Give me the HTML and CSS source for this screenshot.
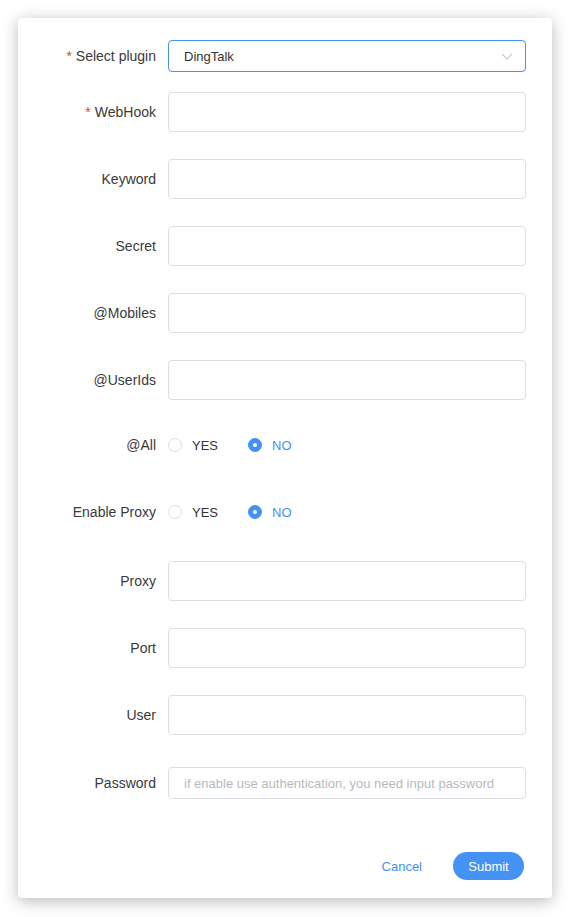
FILE: index.html
```html
<!DOCTYPE html>
<html>
<head>
<meta charset="utf-8">
<link rel="stylesheet" href="styles.css">
</head>
<body>
<div class="card">
  <form class="form">
    <div class="row row-select">
      <label class="label"><span class="req">*</span>Select plugin</label>
      <div class="control">
        <div class="select">
          <span class="select-value">DingTalk</span>
          <svg class="chevron" width="12" height="7" viewBox="0 0 12 7"><path d="M1 1 L6 6 L11 1" fill="none" stroke="#c5c8ce" stroke-width="1.1"/></svg>
        </div>
      </div>
    </div>
    <div class="row">
      <label class="label"><span class="req">*</span>WebHook</label>
      <div class="control"><input class="input" type="text"></div>
    </div>
    <div class="row">
      <label class="label">Keyword</label>
      <div class="control"><input class="input" type="text"></div>
    </div>
    <div class="row">
      <label class="label">Secret</label>
      <div class="control"><input class="input" type="text"></div>
    </div>
    <div class="row">
      <label class="label">@Mobiles</label>
      <div class="control"><input class="input" type="text"></div>
    </div>
    <div class="row">
      <label class="label">@UserIds</label>
      <div class="control"><input class="input" type="text"></div>
    </div>
    <div class="row row-radio">
      <label class="label">@All</label>
      <div class="control radios">
        <span class="radio"><span class="dot"></span><span class="rtext">YES</span></span>
        <span class="radio checked"><span class="dot"></span><span class="rtext">NO</span></span>
      </div>
    </div>
    <div class="row row-radio">
      <label class="label">Enable Proxy</label>
      <div class="control radios">
        <span class="radio"><span class="dot"></span><span class="rtext">YES</span></span>
        <span class="radio checked"><span class="dot"></span><span class="rtext">NO</span></span>
      </div>
    </div>
    <div class="row">
      <label class="label">Proxy</label>
      <div class="control"><input class="input" type="text"></div>
    </div>
    <div class="row">
      <label class="label">Port</label>
      <div class="control"><input class="input" type="text"></div>
    </div>
    <div class="row">
      <label class="label">User</label>
      <div class="control"><input class="input" type="text"></div>
    </div>
    <div class="row row-pass">
      <label class="label">Password</label>
      <div class="control"><input class="input input-small" type="text" placeholder="if enable use authentication, you need input password"></div>
    </div>
  </form>
  <div class="footer">
    <button class="btn-cancel" type="button">Cancel</button>
    <button class="btn-submit" type="button">Submit</button>
  </div>
</div>
</body>
</html>
```

FILE: styles.css
```css
html, body {
  margin: 0;
  padding: 0;
  background: #ffffff;
}
body {
  padding: 18px;
  font-family: "Liberation Sans", Arial, sans-serif;
  color: #333;
}
.card {
  width: 534px;
  height: 880px;
  box-sizing: border-box;
  background: #fff;
  border-radius: 4px;
  box-shadow: 0 3px 16px rgba(0, 0, 0, 0.28);
  padding: 22px 26px 0 0;
  display: flex;
  flex-direction: column;
}
.form {
  display: flex;
  flex-direction: column;
}
.row {
  display: flex;
  align-items: center;
  height: 40px;
  margin-bottom: 27px;
}
.row-select {
  height: 32px;
  margin-bottom: 20px;
}
.row-radio {
  height: 36px;
  margin-bottom: 31px;
}
.row-pass {
  margin-top: 1px;
  margin-bottom: 0;
}
.label {
  width: 150px;
  box-sizing: border-box;
  padding-right: 12px;
  text-align: right;
  font-size: 14px;
  color: #3a3a3a;
  flex: none;
}
.req {
  color: #ed3f14;
  margin-right: 4px;
  font-size: 14px;
}
.control {
  flex: 1;
  height: 100%;
  display: flex;
  align-items: center;
}
.input {
  width: 100%;
  height: 40px;
  box-sizing: border-box;
  border: 1px solid #dcdee2;
  border-radius: 4px;
  padding: 0 15px;
  font-family: "Liberation Sans", Arial, sans-serif;
  font-size: 13px;
  color: #333;
  outline: none;
  background: #fff;
}
.input-small {
  height: 32px;
}
.input::placeholder {
  color: #b7b9bf;
}
.select {
  width: 100%;
  height: 32px;
  box-sizing: border-box;
  border: 1px solid #4a90f2;
  border-radius: 4px;
  padding: 0 12px 0 15px;
  display: flex;
  align-items: center;
  justify-content: space-between;
}
.select-value {
  font-size: 13px;
  color: #333;
}
.chevron {
  display: block;
}
.radio {
  display: inline-flex;
  align-items: center;
  margin-right: 30px;
  font-size: 13px;
  color: #333;
}
.dot {
  width: 14px;
  height: 14px;
  box-sizing: border-box;
  border: 1px solid #dcdee2;
  border-radius: 50%;
  margin-right: 10px;
  position: relative;
  background: #fff;
}
.radio.checked .dot {
  border-color: #4590f4;
  background: #4590f4;
}
.radio.checked .dot::after {
  content: "";
  position: absolute;
  left: 4px;
  top: 4px;
  width: 4px;
  height: 4px;
  border-radius: 50%;
  background: #fff;
}
.radio.checked .rtext {
  color: #4590f4;
}
.footer {
  margin-top: auto;
  height: 28px;
  margin-bottom: 18px;
  display: flex;
  justify-content: flex-end;
  align-items: center;
  padding-right: 2px;
}
.btn-cancel {
  background: none;
  border: none;
  font-family: "Liberation Sans", Arial, sans-serif;
  font-size: 13px;
  color: #4590f4;
  padding: 0;
  margin-right: 31px;
  cursor: pointer;
}
.btn-submit {
  width: 71px;
  height: 28px;
  border: none;
  border-radius: 14px;
  background: #4592f5;
  color: #fff;
  font-family: "Liberation Sans", Arial, sans-serif;
  font-size: 13px;
  cursor: pointer;
}
```
